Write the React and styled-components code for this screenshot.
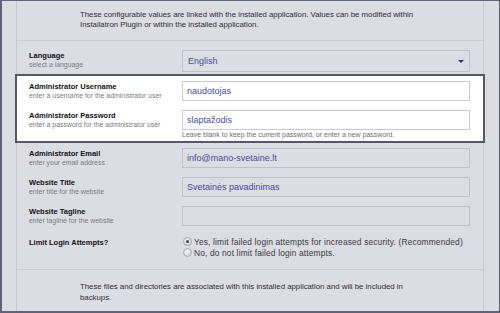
import React from "react"
import styled, { createGlobalStyle } from "styled-components"

const GlobalStyle = createGlobalStyle`
  html, body {
    margin: 0;
    padding: 0;
    background: #dcdce3;
  }
  body {
    font-family: "Liberation Sans", Arial, sans-serif;
  }
`

const Frame = styled.div`
  box-sizing: border-box;
  width: 500px;
  height: 313px;
  overflow: hidden;
  background: #dcdce3;
  border-style: solid;
  border-color: #61617a;
  border-width: 1px 1px 2px 2px;
`

const Panel = styled.div`
  box-sizing: border-box;
  margin-left: 14px;
  width: 468px;
  height: 100%;
  border-left: 1px solid #c7c7d2;
  border-right: 1px solid #c7c7d2;
`

const Intro = styled.div`
  padding: ${p => (p.$bottom ? "11px 0 0 63px" : "9px 0 10px 63px")};
  font-size: 7.8px;
  line-height: ${p => (p.$bottom ? "11px" : "10px")};
  white-space: nowrap;
  color: #2e2e34;
  border-bottom: ${p => (p.$bottom ? "none" : "1px solid #cdcdd6")};
  border-top: ${p => (p.$bottom ? "1px solid #cdcdd6" : "none")};
`

const Fields = styled.div`
  padding: 9px 0 11px;
`

const Highlight = styled.div`
  margin: 2px -2px 5px;
  padding: 5px 0 2px;
  background: #ffffff;
  border: 2px solid #56566e;
`

const Row = styled.div`
  display: grid;
  grid-template-columns: 153px 288px;
  padding: 0 12px;
  margin-bottom: ${p => p.$gap ?? 9}px;
`

const Label = styled.div`
  padding-top: ${p => p.$top ?? 1}px;
`

const Title = styled.div`
  font-size: 7.5px;
  line-height: 9px;
  font-weight: bold;
  color: #111116;
`

const Sub = styled.div`
  font-size: 6.9px;
  line-height: 10px;
  color: #7a7a84;
`

const Input = styled.div`
  box-sizing: border-box;
  height: ${p => (p.$tall ? 22 : 20)}px;
  padding-left: ${p => (p.$tall ? 5 : 4)}px;
  display: flex;
  align-items: center;
  justify-content: space-between;
  font-size: 9px;
  color: #4b4b98;
  background: ${p => (p.$white ? "#ffffff" : "#dcdce3")};
  border: 1px solid ${p => (p.$white ? "#c9c9d1" : "#c1c1cb")};
`

const Arrow = styled.span`
  width: 0;
  height: 0;
  margin-right: 5px;
  border-left: 3px solid transparent;
  border-right: 3px solid transparent;
  border-top: 3px solid #2e2e86;
`

const Hint = styled.div`
  margin-top: 1px;
  font-size: 7px;
  line-height: 8px;
  color: #6c6c76;
`

const Radios = styled.div`
  display: flex;
  flex-direction: column;
  padding-top: 1px;
`

const Option = styled.label`
  display: flex;
  align-items: center;
  gap: 2px;
  height: 11px;
  padding-left: 1px;
  font-size: 8.4px;
  letter-spacing: 0.15px;
  color: #3a3a42;
`

const Dot = styled.span`
  box-sizing: border-box;
  flex: none;
  width: 9px;
  height: 9px;
  border-radius: 50%;
  border: 1px solid #a9a9b6;
  background: radial-gradient(circle at 40% 35%, #f4f4f8, #c9c9d3);
  display: flex;
  align-items: center;
  justify-content: center;
  &::after {
    content: "";
    width: 3px;
    height: 3px;
    border-radius: 50%;
    background: ${p => (p.$on ? "#4a4a55" : "transparent")};
  }
`

const Field = ({ title, sub, children, gap }) => (
  <Row $gap={gap}>
    <Label>
      <Title>{title}</Title>
      <Sub>{sub}</Sub>
    </Label>
    <div>{children}</div>
  </Row>
)

export default function App() {
  return (
    <>
      <GlobalStyle />
      <Frame>
        <Panel>
          <Intro>
            These configurable values are linked with the installed application. Values can be modified within
            <br />
            Installatron Plugin or within the installed application.
          </Intro>
          <Fields>
            <Row $gap={0}>
              <Label>
                <Title>Language</Title>
                <Sub>select a language</Sub>
              </Label>
              <Input $tall>
                English
                <Arrow />
              </Input>
            </Row>
            <Highlight>
              <Field title="Administrator Username" sub="enter a username for the administrator user">
                <Input $white>naudotojas</Input>
              </Field>
              <Field title="Administrator Password" sub="enter a password for the administrator user" gap={0}>
                <Input $white>slaptažodis</Input>
                <Hint>Leave blank to keep the current password, or enter a new password.</Hint>
              </Field>
            </Highlight>
            <Field title="Administrator Email" sub="enter your email address">
              <Input>info@mano-svetaine.lt</Input>
            </Field>
            <Field title="Website Title" sub="enter title for the website">
              <Input>Svetainės pavadinimas</Input>
            </Field>
            <Field title="Website Tagline" sub="enter tagline for the website">
              <Input />
            </Field>
            <Row $gap={0}>
              <Label $top={3}>
                <Title>Limit Login Attempts?</Title>
              </Label>
              <Radios>
                <Option>
                  <Dot $on />
                  Yes, limit failed login attempts for increased security. (Recommended)
                </Option>
                <Option>
                  <Dot />
                  No, do not limit failed login attempts.
                </Option>
              </Radios>
            </Row>
          </Fields>
          <Intro $bottom>
            These files and directories are associated with this installed application and will be included in
            <br />
            backups.
          </Intro>
        </Panel>
      </Frame>
    </>
  )
}
